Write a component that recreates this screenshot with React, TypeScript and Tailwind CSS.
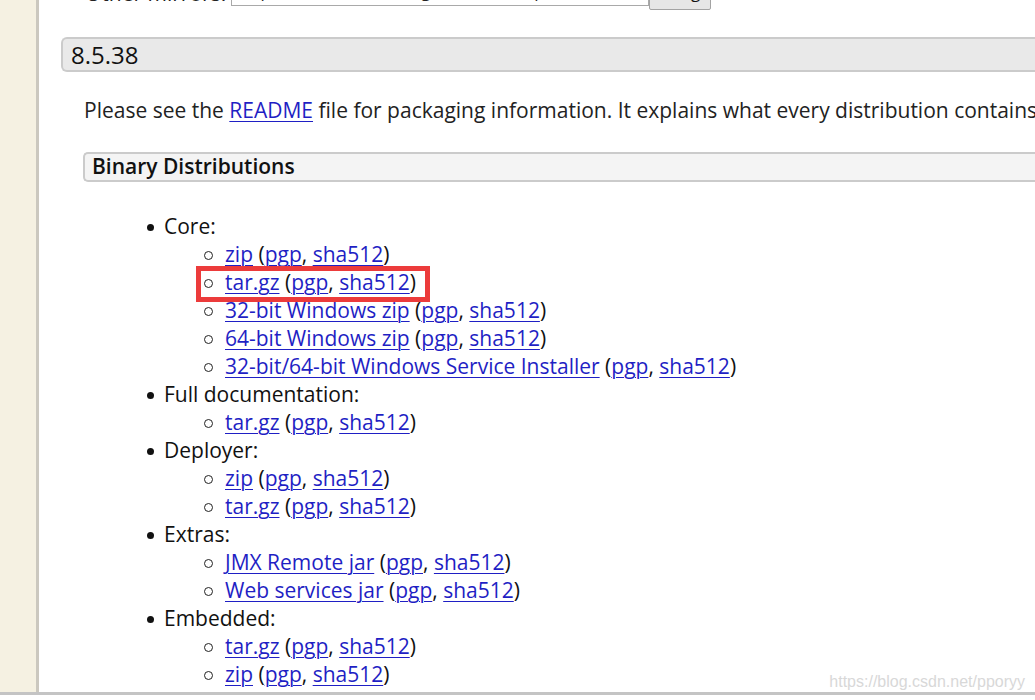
import React from 'react'

const A = ({ children }: { children: React.ReactNode }) => (
  <a href="#" className="text-[#1f1fc4] underline underline-offset-[3px] decoration-1">
    {children}
  </a>
)

type Item = { label: string }

const Sub = ({ label, boxed }: Item & { boxed?: boolean }) => (
  <li className="relative flex items-center h-[28px]">
    <span className="absolute left-[-21px] top-[11px] w-[9px] h-[9px] rounded-full border border-[#222]" />
    <span>
      <A>{label}</A> (<A>pgp</A>, <A>sha512</A>)
    </span>
    {boxed && (
      <span className="absolute left-[-29px] top-[-2px] w-[234px] h-[36px] border-[5px] border-[#ec3b3b]" />
    )}
  </li>
)

const Group = ({ title, items, boxedIndex }: { title: string; items: string[]; boxedIndex?: number }) => (
  <li className="relative">
    <div className="relative h-[28px] flex items-center">
      <span className="absolute left-[-17px] top-[12px] w-[7px] h-[7px] rounded-full bg-[#111]" />
      {title}
    </div>
    <ul className="pl-[61px]">
      {items.map((l, i) => (
        <Sub key={i} label={l} boxed={i === boxedIndex} />
      ))}
    </ul>
  </li>
)

export default function App() {
  return (
    <div
      className="relative w-[1035px] h-[700px] overflow-hidden bg-white flex flex-col"
      style={{ fontFamily: '"Open Sans", "Noto Sans", sans-serif' }}
    >
      <div className="flex h-[695px] border-b-[3px] border-[#c4c4c4]">
        <div className="w-[39px] shrink-0 bg-[#f5f1e2] border-r-[3px] border-[#cbc8bf]" />
        <div className="flex-1 overflow-hidden text-[21px] text-[#111]">
          <div className="flex items-start mt-[-24px] h-[34px] pl-[46px]">
            <span className="mt-[2px] w-[146px] text-[#222]">Other mirrors:</span>
            <div className="w-[418px] h-[30px] border border-[#a9a9a9] bg-white text-[17px] px-[6px] leading-[28px] text-[#222]">
              http://mirrors.tuna.tsinghua.edu.cn/apache/
            </div>
            <div className="w-[62px] h-[34px] border border-[#a3a3a3] rounded-[2px] bg-[#e6e6e6] text-[17px] leading-[30px] text-center">
              Change
            </div>
          </div>
          <div className="ml-[22px] mt-[27px] h-[35px] border-2 border-r-0 border-[#cbcbcb] rounded-l-[6px] bg-[#e9e9e9] flex items-center pl-[8px] text-[24px] font-medium">
            8.5.38
          </div>
          <p className="ml-[45px] mt-[23px] h-[30px] leading-[30px] whitespace-nowrap text-[#222]">
            Please see the <A>README</A> file for packaging information. It explains what every distribution contains.
          </p>
          <div className="ml-[44px] mt-[27px] h-[30px] border-2 border-r-0 border-[#cbcbcb] rounded-l-[5px] bg-[#f4f4f4] flex items-center pl-[7px] font-semibold text-[#111]">
            Binary Distributions
          </div>
          <ul className="pl-[125px] mt-[30px] leading-[28px]">
            <Group
              title="Core:"
              items={['zip', 'tar.gz', '32-bit Windows zip', '64-bit Windows zip', '32-bit/64-bit Windows Service Installer']}
              boxedIndex={1}
            />
            <Group title="Full documentation:" items={['tar.gz']} />
            <Group title="Deployer:" items={['zip', 'tar.gz']} />
            <Group title="Extras:" items={['JMX Remote jar', 'Web services jar']} />
            <Group title="Embedded:" items={['tar.gz', 'zip']} />
          </ul>
        </div>
      </div>
      <div className="flex-1 bg-white" />
      <span
        className="absolute right-[10px] top-[672px] text-[16px] leading-[20px] text-[#d8d8d8]"
        style={{ fontFamily: '"Liberation Sans", Arial, sans-serif' }}
      >
        https://blog.csdn.net/pporyy
      </span>
    </div>
  )
}
